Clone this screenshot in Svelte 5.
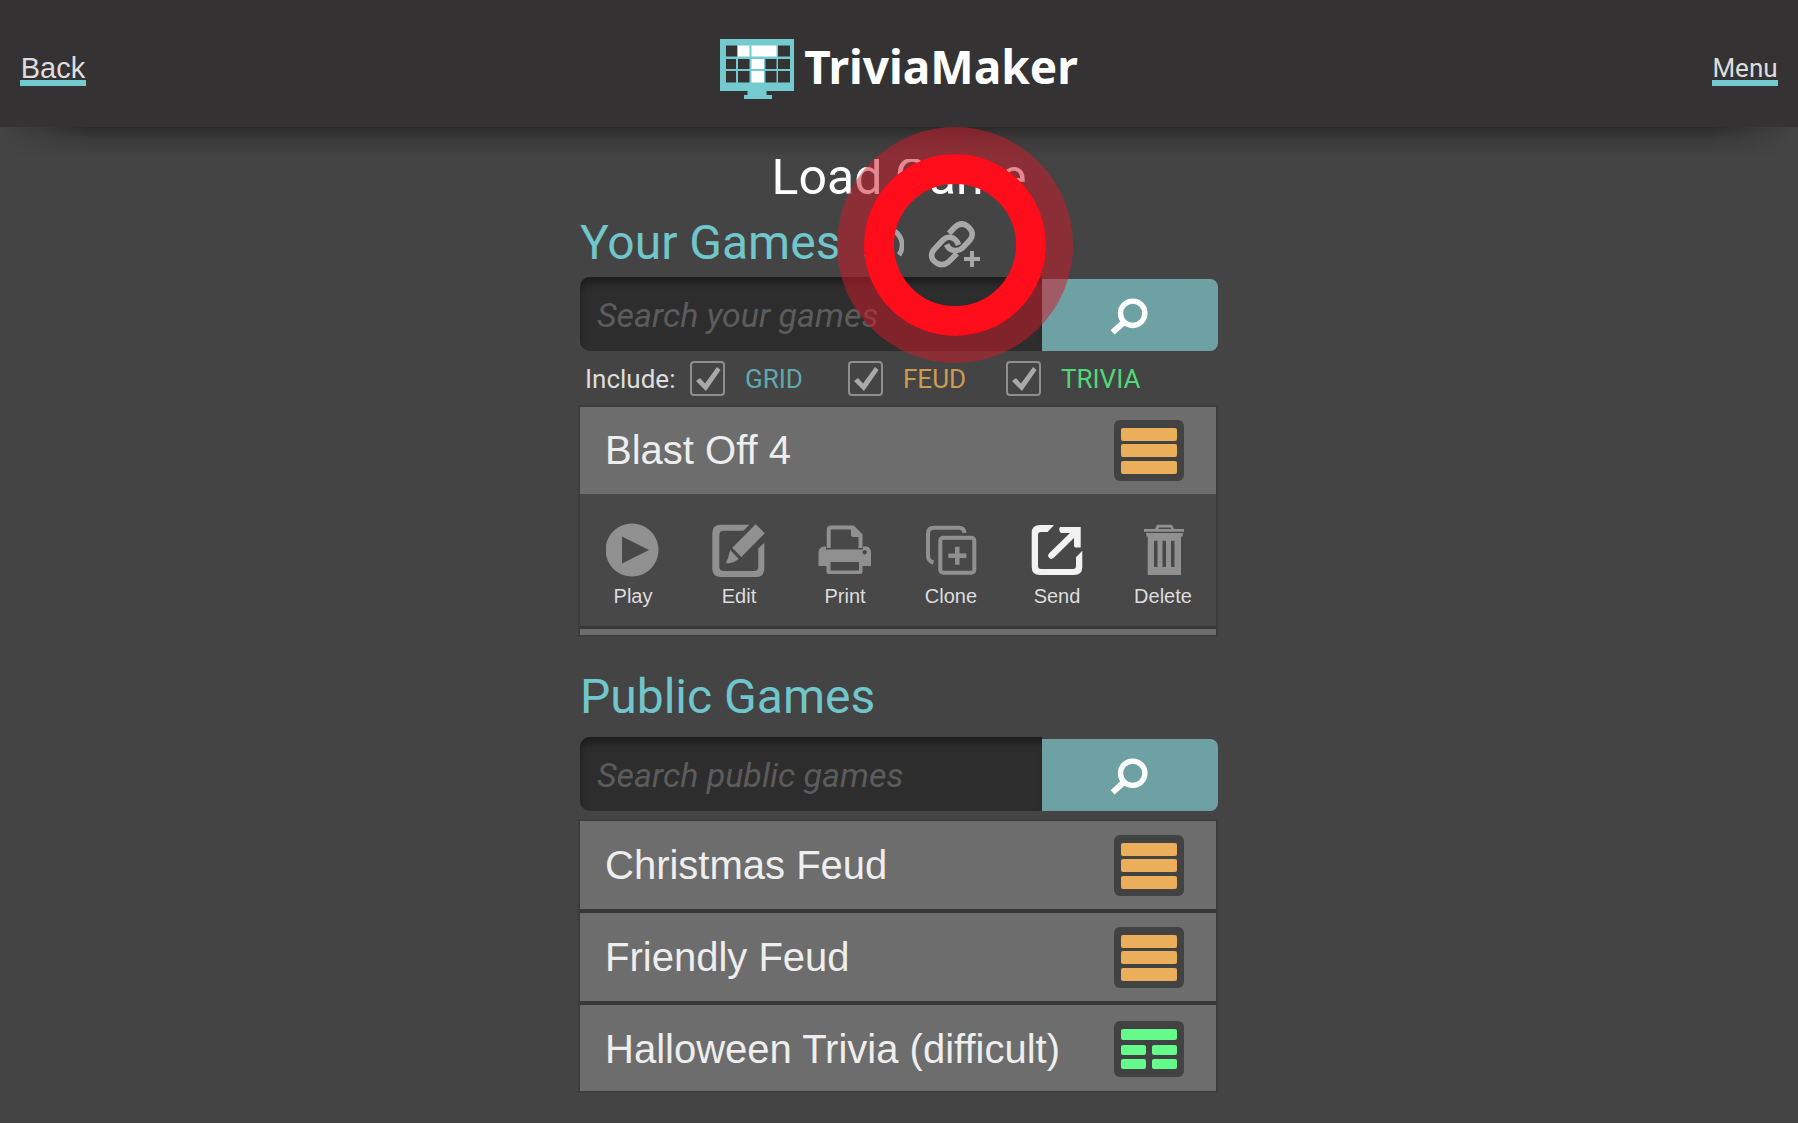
<script lang="ts">
	type Kind = 'feud' | 'trivia';

	const filters = [
		{ id: 'grid', label: 'GRID' },
		{ id: 'feud', label: 'FEUD' },
		{ id: 'trivia', label: 'TRIVIA' }
	];
	const actions = ['Play', 'Edit', 'Print', 'Clone', 'Send', 'Delete'];
	const publicGames: { name: string; kind: Kind }[] = [
		{ name: 'Christmas Feud', kind: 'feud' },
		{ name: 'Friendly Feud', kind: 'feud' },
		{ name: 'Halloween Trivia (difficult)', kind: 'trivia' }
	];
</script>

{#snippet badge(kind: Kind)}
	{#if kind === 'feud'}
		<svg width="70" height="61" viewBox="0 0 70 61" aria-hidden="true">
			<rect width="70" height="61" rx="6" fill="#424242" />
			<g fill="#ebae5b">
				<rect x="7" y="8" width="56" height="13" rx="2" />
				<rect x="7" y="24" width="56" height="13" rx="2" />
				<rect x="7" y="41" width="56" height="13" rx="2" />
			</g>
		</svg>
	{:else}
		<svg width="70" height="56" viewBox="0 0 70 56" aria-hidden="true">
			<rect width="70" height="56" rx="6" fill="#424242" />
			<g fill="#64fa8c">
				<rect x="7" y="8" width="56" height="11" rx="2" />
				<rect x="7" y="24" width="25" height="10" rx="2" />
				<rect x="38" y="24" width="25" height="10" rx="2" />
				<rect x="7" y="38" width="25" height="10" rx="2" />
				<rect x="38" y="38" width="25" height="10" rx="2" />
			</g>
		</svg>
	{/if}
{/snippet}

{#snippet search(id: string, hint: string)}
	<form class="search" onsubmit={(e) => e.preventDefault()}>
		<input {id} type="text" placeholder={hint} aria-label={hint} />
		<button type="submit" aria-label="Search">
			<svg width="40" height="40" viewBox="0 0 40 40" fill="none" stroke="#fff">
				<circle cx="22.7" cy="18.3" r="12.2" stroke-width="5.4" />
				<path d="M2.6 37.4L14 27" stroke-width="6" />
			</svg>
		</button>
	</form>
{/snippet}

<div class="page">
	<header>
		<a class="nav" href="#back">Back</a>
		<a class="logo" href="#home">
			<svg width="74" height="60" viewBox="0 0 74 60" aria-hidden="true">
				<path d="M0 0H74V52H46.500V56H52V60H24V56H27.500V52H0Z" fill="#73cbd0" />
				<g fill="#353233">
					<path d="M6 6.500H17V17.500H6ZM58 6.500H70V17.500H58Z" />
					<path d="M6 20H16V30H6ZM18 20H29.500V30H18ZM45.500 20H56.500V30H45.500ZM58 20H70V30H58Z" />
					<path d="M6 32H16V43.500H6ZM18 32H29.500V43.500H18ZM45.500 32H56.500V43.500H45.500ZM58 32H70V43.500H58Z" />
				</g>
				<path d="M18 6.500H29.500V17.500H18ZM31.500 6.500H56.500V17.500H31.500ZM31.500 20H44V30H31.500ZM31.500 32H44V43.500H31.500Z" fill="#fff" />
			</svg>
			<span>TriviaMaker</span>
		</a>
		<a class="nav menu" href="#menu">Menu</a>
	</header>

	<main>
		<h1>Load Game</h1>

		<section>
			<div class="heading">
				<h2>Your Games</h2>
				<button class="tool" aria-label="Refresh">
					<svg width="40" height="46" viewBox="0 0 40 46" fill="none" stroke="#a3a3a3" stroke-width="5">
						<path d="M35 33A17 17 0 1 0 8 34" />
						<path d="M1 32L9 35L14 27" />
					</svg>
				</button>
				<button class="tool add" aria-label="Add game from link">
					<svg width="54" height="48" viewBox="0 0 54 48" fill="none" stroke="#a8a8a8">
						<g stroke-width="5.600">
							<path d="M21 12.500L26 7C31 2 36 2 40.500 6C45.500 11 45 15 42 19L35 26.500C30 31 22 31 18.500 23.500" />
							<path d="M30.500 24C27.500 15.500 20 14 14.500 19.500L7 27.500C2.500 32 2.500 37 6.500 40.500C11 44.500 16 44.500 20.500 41L29 32.500" />
						</g>
						<path d="M36 38H52M44 30V46" stroke-width="4" />
					</svg>
					<span class="ring"></span>
				</button>
			</div>
			{@render search('own', 'Search your games')}

			<div class="filters">
				<span>Include:</span>
				{#each filters as f (f.id)}
					<label class={f.id}>
						<span class="tick">
							<input type="checkbox" checked />
							<svg width="36" height="36" viewBox="0 0 36 36" aria-hidden="true">
								<path d="M6 20L10 17L15 22.500L27 6L30.500 9L16 30Z" fill="#a9a9a9" />
							</svg>
						</span>
						{f.label}
					</label>
				{/each}
			</div>

			<ul class="games own">
				<li>
					<button class="row">
						<span>Blast Off 4</span>
						{@render badge('feud')}
					</button>
					<div class="actions">
						{#each actions as name (name)}
							<button class:active={name === 'Send'}>
								<svg width="54" height="54" viewBox="0 0 54 54" fill="currentColor" aria-hidden="true">
									{#if name === 'Play'}
										<path fill-rule="evenodd" d="M26 .500a26.500 26.500 0 1 0 .010 0ZM16 13.500L43 27L16 40.500Z" />
									{:else if name === 'Edit'}
										<path d="M37.300 1.700H9Q.300 1.700.300 10V45.500Q.300 54 9 54H44Q52.300 54 52.300 45.500V19.700L46.300 25.500V44Q46.300 48 42 48H12Q7.300 48 7.300 44V12Q7.300 7.700 12 7.700H31.300Z" />
										<path d="M20.300 24.700L43.700 1.300L52.700 10.300L29.300 34Z" />
										<path d="M18.300 27L26.700 36L22 39L16 40.500L14 39.500L16 35Z" />
									{:else if name === 'Print'}
										<path d="M10.700 25V7Q10.700 4.500 13 4.500H35L42.500 12V25" fill="none" stroke="currentColor" stroke-width="4" />
										<path d="M33 3V12Q33 14 35 14H44Z" />
										<path fill-rule="evenodd" d="M8 23.500V26.500H45V23.500H48Q53 24 53 30V43H44.500V49Q44.500 51 42 51H11Q8.500 51 8.500 49V43H.500V30Q.500 24 6 23.500ZM12.500 39V47.500H41V39ZM46.700 27a2.200 2.200 0 1 0 .010 0Z" />
									{:else if name === 'Clone'}
										<g fill="none" stroke="currentColor" stroke-width="4">
											<path d="M40.500 10Q40 4.700 35 4.700H10Q4 4.700 4 10.500V33Q4 38 9.500 39.500" />
											<rect x="16.300" y="14.700" width="34" height="35" rx="3" />
											<path d="M24.300 32.700H42.300M33.300 23.700V41.700" stroke-width="4.500" />
										</g>
									{:else if name === 'Send'}
										<path d="M24 2H10Q1.700 2 1.700 10V44Q1.700 52 10 52H44Q52.300 52 52.300 44V27.700L46 34.300V43Q46 46 43 46H11Q8 46 8 43V12Q8 9 11 9H17.700Z" />
										<path d="M21.500 32.500L43 11.500" stroke="currentColor" stroke-width="6.500" stroke-linecap="round" />
										<path d="M30 4H50.700V24.500H45.500Q44 24.500 44 22.500V10H31Q28 7 30 4Z" />
									{:else}
										<path d="M8 6H19L21 1.700H36L38 6H48V8.700H8ZM23 4.500L22.500 6H35L34.500 4.500Z" fill-rule="evenodd" />
										<path fill-rule="evenodd" d="M10 10H47.300L46.500 13.500H45V52H11.700V13.500H10.500ZM18 17.700V44H21.500V17.700ZM26.500 17.700V44H30V17.700ZM35 17.700V44H38.500V17.700Z" />
									{/if}
								</svg>
								<span>{name}</span>
							</button>
						{/each}
					</div>
				</li>
				<li class="next"></li>
			</ul>
		</section>

		<section>
			<div class="heading">
				<h2>Public Games</h2>
			</div>
			{@render search('public', 'Search public games')}

			<ul class="games public">
				{#each publicGames as game (game.name)}
					<li>
						<button class="row">
							<span>{game.name}</span>
							{@render badge(game.kind)}
						</button>
					</li>
				{/each}
			</ul>
		</section>
	</main>
</div>

<style>
	:global(body) {
		background: #fff;
	}
	.page {
		box-sizing: border-box;
		min-height: calc(100vh - 1px);
		background: #444;
		color: #fff;
		font-family: Roboto, sans-serif;
	}
	button {
		padding: 0;
		border: 0;
		background: none;
		color: inherit;
		font: inherit;
		cursor: pointer;
	}
	svg {
		display: block;
		flex: none;
	}

	/* Header */
	header {
		position: relative;
		box-sizing: border-box;
		display: grid;
		grid-template-columns: 1fr auto 1fr;
		align-items: center;
		height: 127px;
		padding: 10px 20px 0;
		background: #353233;
	}
	header::after {
		content: '';
		position: absolute;
		top: 100%;
		left: 0;
		right: 0;
		height: 32px;
		background: linear-gradient(#2b2b2b, #3b3b3b 40%, #444);
		mask-image: linear-gradient(90deg, transparent, #000 90px, #000 calc(100% - 90px), transparent);
	}
	.nav {
		justify-self: start;
		min-width: 66px;
		padding-top: 4px;
		border-bottom: 6px solid #73cbd0;
		color: #ddd;
		font: 29px/24px 'Liberation Sans', Arial, sans-serif;
		text-align: center;
		text-decoration: none;
	}
	.menu {
		justify-self: end;
		font: 26px/24px Roboto, sans-serif;
	}
	.logo {
		display: flex;
		align-items: center;
		gap: 10px;
		color: #fff;
		font: bold 46px/60px 'Noto Sans', sans-serif;
		text-decoration: none;
	}
	.logo span {
		margin-top: -6px;
	}

	/* Column */
	main {
		width: min(100%, 638px);
		margin: 0 auto;
	}
	h1 {
		margin: 0;
		padding-top: 20px;
		font-size: 50px;
		font-weight: 400;
		line-height: 60px;
		text-align: center;
	}
	.heading {
		box-sizing: border-box;
		display: flex;
		align-items: center;
		height: 70px;
		padding-top: 2px;
	}
	h2 {
		margin: 0;
		color: #70c6cb;
		font-size: 48px;
		font-weight: 400;
		line-height: 68px;
	}
	.tool {
		margin: 4px 0 0 24px;
	}
	.add {
		position: relative;
	}
	/* tap highlight round the link button */
	.ring {
		position: absolute;
		top: 50%;
		left: 50%;
		z-index: 2;
		box-sizing: border-box;
		width: 182px;
		height: 182px;
		margin: -91px;
		border: 30px solid #ff0d1b;
		border-radius: 50%;
		box-shadow: 0 0 0 27px rgb(208 26 42 / 52%);
		pointer-events: none;
	}

	/* Search */
	.search {
		display: flex;
		align-items: flex-end;
	}
	.search input {
		flex: 1;
		min-width: 0;
		box-sizing: border-box;
		height: 74px;
		padding: 2px 17px 0;
		border: 0;
		border-radius: 10px 0 0 10px;
		background: #2d2d2d;
		box-shadow: inset 2px 8px 6px -2px #1e1e1e;
		color: #ddd;
		font: italic 400 34px/40px Roboto, sans-serif;
	}
	.search input::placeholder {
		color: #5c5c5c;
		opacity: 1;
	}
	.search button {
		display: grid;
		place-items: center;
		width: 176px;
		height: 72px;
		border-radius: 0 8px 8px 0;
		background: #6da1a4;
	}

	/* Filters */
	.filters {
		display: flex;
		align-items: center;
		height: 56px;
		padding-left: 5px;
		font-size: 26px;
		line-height: 36px;
	}
	.filters > span {
		width: 105px;
		color: #ddd;
	}
	.filters label {
		display: flex;
		align-items: center;
		gap: 19px;
		width: 158px;
	}
	.tick {
		display: grid;
	}
	.tick input,
	.tick svg {
		grid-area: 1 / 1;
	}
	.tick svg {
		pointer-events: none;
	}
	.tick input {
		appearance: none;
		box-sizing: border-box;
		width: 35px;
		height: 35px;
		margin: 0;
		border: 2px solid #8f8f8f;
		border-radius: 4px;
	}
	.tick input:not(:checked) + svg {
		visibility: hidden;
	}
	.grid {
		color: #62a9ad;
	}
	.feud {
		color: #cc9c50;
	}
	.trivia {
		color: #51d877;
	}

	/* Lists */
	.games {
		margin: 0 2px 0 0;
		padding: 0;
		box-shadow: 0 0 0 2px #3c3c3c;
		list-style: none;
		font-family: 'Liberation Sans', Arial, sans-serif;
	}
	.row {
		display: flex;
		align-items: center;
		justify-content: space-between;
		width: 100%;
		height: 87px;
		padding: 0 32px 0 25px;
		background: #6d6d6d;
		color: #eee;
		font-size: 40px;
		text-align: left;
	}
	.actions {
		display: grid;
		grid-template-columns: repeat(6, 1fr);
		height: 132px;
		background: #484848;
		color: #909090;
	}
	.actions button {
		display: flex;
		flex-direction: column;
		align-items: center;
		gap: 7px;
		padding-top: 29px;
		font-size: 20px;
		line-height: 24px;
	}
	.actions span {
		color: #ddd;
	}
	.actions .active {
		color: #f2f2f2;
	}
	.next {
		height: 6px;
		border-top: 3px solid #383838;
		background: #6d6d6d;
	}
	.own {
		margin-bottom: 26px;
	}
	/* the last row is cut off by the scroll area */
	.public {
		max-height: 270px;
		margin-top: 10px;
		overflow: hidden;
	}
	.public .row {
		height: 88px;
	}
	.public li + li {
		border-top: 4px solid #383838;
	}
	section:last-child .heading {
		height: 76px;
		padding: 0 0 4px;
	}
</style>
